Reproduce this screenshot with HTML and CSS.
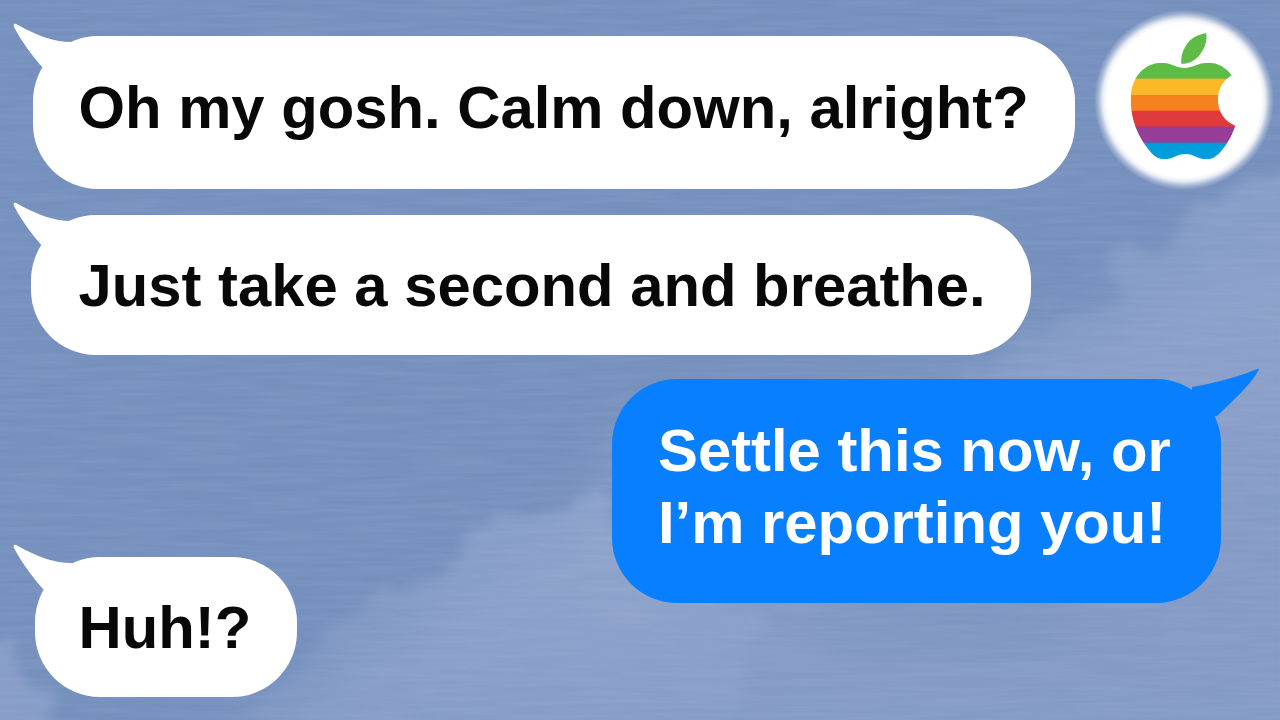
FILE: index.html
```html
<!doctype html>
<html lang="en">
<head>
    <meta charset="utf-8">
    <meta name="viewport" content="width=device-width, initial-scale=1">
    <title>Messages</title>

    <link rel="stylesheet" href="styles.css">
</head>
<body>
<!-- cloudy sky -->
<svg class="sky" viewBox="0 0 1280 720" preserveAspectRatio="none" aria-hidden="true">
    <defs>
        <filter id="cloud" x="-10%" y="-10%" width="120%" height="120%" color-interpolation-filters="sRGB">
            <feTurbulence type="fractalNoise" baseFrequency="0.025" numOctaves="4" seed="4" result="n"/>
            <feDisplacementMap in="SourceGraphic" in2="n" scale="60" xChannelSelector="R" yChannelSelector="G"/>
            <feGaussianBlur stdDeviation="6"/>
        </filter>
        <filter id="soft" x="-20%" y="-20%" width="140%" height="140%" color-interpolation-filters="sRGB">
            <feGaussianBlur stdDeviation="28"/>
        </filter>
        <filter id="streaks" x="0" y="0" width="100%" height="100%" color-interpolation-filters="sRGB">
            <feTurbulence type="fractalNoise" baseFrequency="0.012 0.22" numOctaves="3" seed="9"/>
            <feColorMatrix values="0 0 0 0 1  0 0 0 0 1  0 0 0 0 1  0.9 0 0 0 -0.3"/>
        </filter>
        <linearGradient id="fade" x1="0" y1="0" x2="0" y2="1">
            <stop offset="0" stop-color="#9baed4" stop-opacity=".8"/>
            <stop offset="1" stop-color="#9baed4" stop-opacity=".1"/>
        </linearGradient>
    </defs>
    <rect width="1280" height="720" fill="#7690be"/>
    <path filter="url(#soft)" fill="#889ec8" opacity=".85" d="M1340 240L1200 270 1080 340 960 390 620 430 600 520 470 590 330 680 200 760H1340Z"/>
    <path filter="url(#cloud)" fill="url(#fade)" opacity=".6" d="M1320 180L1235 185 1190 210 1175 250 1120 255 1105 300 1050 315 1020 350 960 380 960 500 1320 500Z"/>
    <path filter="url(#cloud)" fill="url(#fade)" opacity=".7" d="M590 490L540 505 500 515 470 540 450 570 420 570 385 600 340 620 320 650 290 680 180 735 720 740 760 620 640 560Z"/>
    <path filter="url(#cloud)" fill="#98abd3" opacity=".5" d="M-20 640L15 645 28 690 60 740-20 740Z"/>
    <path filter="url(#soft)" fill="#7890be" opacity=".6" d="M780 590H1080L1040 650 860 640Z"/>
    <rect width="1280" height="720" filter="url(#streaks)" opacity=".11"/>
</svg>

<main class="chat">
    <div class="row row-first">
        <div class="bubble bubble-in msg-calm">
            <svg class="tail" viewBox="0 0 62 46" aria-hidden="true"><path d="M1 1Q2 0 5 2C25 13 41 19 59 19L61 46H31C21 35 10 21 1 4Q0 2 1 1Z"/></svg>
            Oh my gosh. Calm down, alright?
        </div>
        <div class="avatar">
            <svg class="logo" viewBox="200 90 340 400" role="img" aria-label="Apple">
                <clipPath id="apple">
                    <path d="M371 204C395 204 412 188 445 188C472 188 497 202 514 226C490 240 473 264 473 300C473 335 492 364 525 377C515 408 497 437 480 456C468 470 455 478 437 478C415 478 400 462 375 462C348 462 338 478 312 478C292 478 279 468 264 448C235 412 211 360 211 300C211 225 258 188 305 188C330 188 352 204 371 204Z"/>
                </clipPath>
                <path fill="#5ebb46" d="M438 100C441 125 432 148 416 167C402 183 383 192 363 191C361 168 368 146 384 127C398 111 418 102 438 100Z"/>
                <g clip-path="url(#apple)">
                    <rect x="200" y="180" width="340" height="57" fill="#5ebb46"/>
                    <rect x="200" y="236" width="340" height="50" fill="#fcb827"/>
                    <rect x="200" y="285" width="340" height="48" fill="#f6821f"/>
                    <rect x="200" y="332" width="340" height="49" fill="#e03a3c"/>
                    <rect x="200" y="380" width="340" height="49" fill="#963d97"/>
                    <rect x="200" y="428" width="340" height="52" fill="#009ddc"/>
                </g>
            </svg>
        </div>
    </div>
    <div class="row">
        <div class="bubble bubble-in msg-breathe">
            <svg class="tail" viewBox="0 0 62 46" aria-hidden="true"><path d="M1 1Q2 0 5 2C25 13 41 19 59 19L61 46H31C21 35 10 21 1 4Q0 2 1 1Z"/></svg>
            Just take a second and breathe.
        </div>
    </div>
    <div class="row row-out">
        <div class="bubble bubble-out">
            <svg class="tail" viewBox="0 0 70 48" aria-hidden="true"><path d="M0 18C18 15 44 9 65 0Q68-1 66 2C60 14 41 32 25 47L0 48Z"/></svg>
            Settle this now, or<br>I’m reporting you!
        </div>
    </div>
    <div class="row">
        <div class="bubble bubble-in msg-huh">
            <svg class="tail" viewBox="0 0 62 46" aria-hidden="true"><path d="M1 1Q2 0 5 2C25 13 41 19 59 19L61 46H31C21 35 10 21 1 4Q0 2 1 1Z"/></svg>
            Huh!?
        </div>
    </div>
</main>
</body>
</html>
```
FILE: styles.css
```css
* {
    box-sizing: border-box;
}

body {
    margin: 0;
    width: 1280px;
    height: 720px;
    overflow: hidden;
    position: relative;
    background: #7690be;
    font-family: "Liberation Sans", Arial, sans-serif;
    font-size: 59.8px;
    font-weight: 700;
    line-height: 72px;
}

.sky {
    position: absolute; /* behind the chat */
    inset: 0;
    width: 100%;
    height: 100%;
}

.chat {
    position: relative;
    display: flex;
    flex-direction: column;
}

.row {
    display: flex;
    align-items: flex-start;
}

.row-first {
    height: 214.5px;
    padding-top: 10px;
}

.row-out {
    justify-content: flex-end;
    padding: 24px 59.5px 0 0;
}

.bubble {
    position: relative;
    padding: 35px 0 0 46px;
    border-radius: 65px;
    white-space: nowrap;
}

.bubble-in {
    background: #fff;
    color: #080808;
}

.bubble-out {
    width: 608.5px;
    height: 224px;
    padding-top: 36px;
    background: #087fff;
    color: #fff;
}

.msg-calm {
    width: 1042.5px;
    height: 152.5px;
    margin: 26px 0 0 32.5px;
    padding-top: 36px;
}

.msg-breathe {
    width: 999.5px;
    height: 140px;
    margin-left: 31px;
    padding-left: 47.5px;
}

.msg-huh {
    width: 262px;
    height: 140px;
    margin: -46px 0 0 34.5px;
    padding-left: 44px;
}

/* speech tails stick out of the bubble corner */
.tail {
    position: absolute;
    overflow: visible;
}

.bubble-in .tail {
    left: -20px;
    top: -13px;
    width: 62px;
    height: 46px;
    fill: #fff;
}

.msg-breathe .tail {
    left: -18.5px;
}

.msg-huh .tail {
    left: -22px;
}

.bubble-out .tail {
    right: -41.5px;
    top: -9.5px;
    width: 70px;
    height: 48px;
    fill: #087fff;
}

.avatar {
    display: flex;
    align-items: center;
    justify-content: center;
    width: 180px;
    height: 180px;
    margin-left: 19px;
    background: radial-gradient(circle, #fff 77px, rgba(255, 255, 255, .85) 81px, rgba(255, 255, 255, .3) 86px, transparent 90px);
}

.logo {
    width: 113.33px;
    height: 133.33px;
    margin: -7px 0 0 -1px;
}
```
